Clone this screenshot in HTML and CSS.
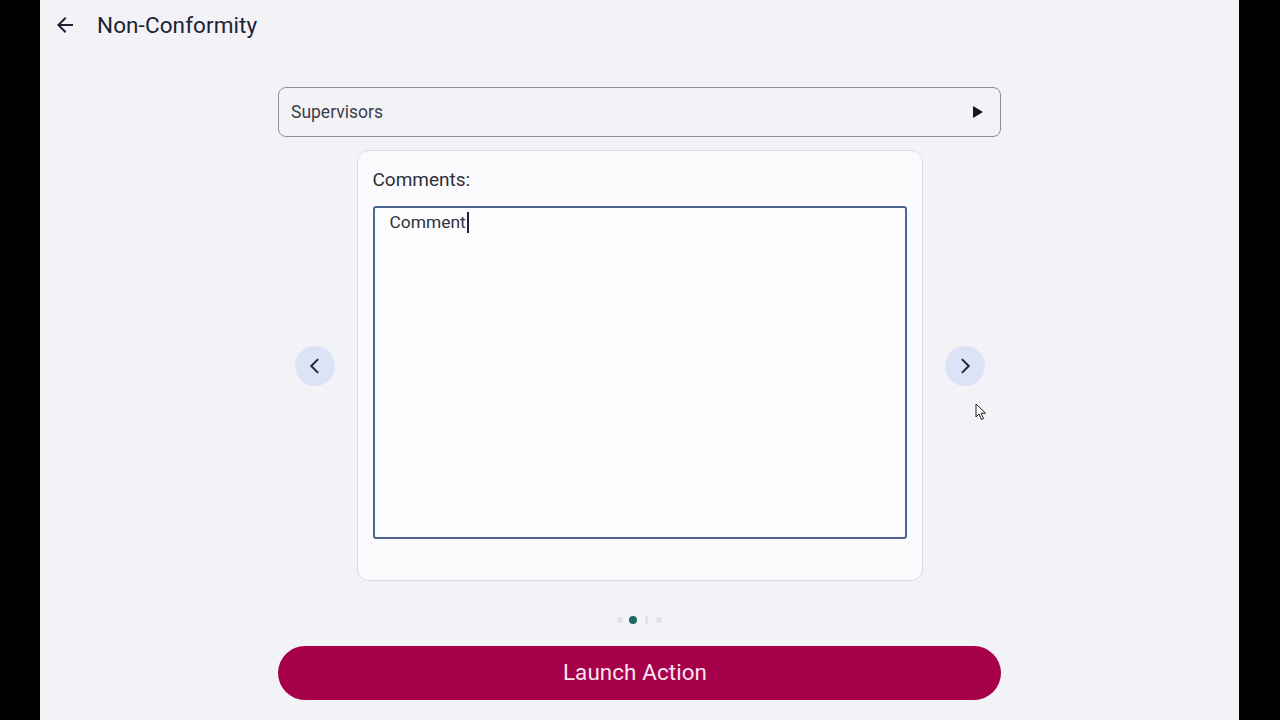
FILE: index.html
```html
<!DOCTYPE html>
<html lang="en">
<head>
<meta charset="utf-8">
<title>Non-Conformity</title>
<link rel="stylesheet" href="styles.css">
</head>
<body>
<div class="app">
  <header class="topbar">
    <svg class="back" viewBox="0 0 24 24" width="24" height="24"><path d="M20 11H7.83l5.59-5.59L12 4l-8 8 8 8 1.41-1.41L7.83 13H20v-2z" fill="#1b2236"/></svg>
    <h1 class="title">Non-Conformity</h1>
  </header>
  <main class="main">
    <div class="select">
      <span class="select-label">Supervisors</span>
      <svg class="play" viewBox="0 0 10 12" width="10" height="12"><polygon points="0,0 10,6 0,12" fill="#16181d"/></svg>
    </div>
    <div class="carousel">
      <button class="nav"><svg viewBox="0 0 24 24" width="30" height="30"><polyline points="14.5,6.5 9,12 14.5,17.5" fill="none" stroke="#222a38" stroke-width="1.6"/></svg></button>
      <section class="card">
        <div class="label">Comments:</div>
        <div class="textarea"><span class="value">Comment</span><span class="caret"></span></div>
      </section>
      <button class="nav"><svg viewBox="0 0 24 24" width="30" height="30"><polyline points="9.5,6.5 15,12 9.5,17.5" fill="none" stroke="#222a38" stroke-width="1.6"/></svg></button>
    </div>
    <div class="dots">
      <span class="dot"></span>
      <span class="dot active"></span>
      <span class="dot pill"></span>
      <span class="dot"></span>
    </div>
    <button class="launch">Launch Action</button>
  </main>
  <svg class="pointer" viewBox="0 0 12 18" width="12" height="18"><path d="M1 1 L1 14 L4 11 L6.5 16.5 L8.5 15.6 L6 10.2 L10.5 10.2 Z" fill="#fff" stroke="#222" stroke-width="1"/></svg>
</div>
</body>
</html>
```

FILE: styles.css
```css
html, body {
  margin: 0;
  padding: 0;
  background: #000;
}
body {
  font-family: Roboto, "Liberation Sans", sans-serif;
}
.app {
  position: relative;
  margin: 0 41px 0 40px;
  height: 720px;
  background: #f2f2f7;
  display: flex;
  flex-direction: column;
  overflow: hidden;
}
.topbar {
  height: 50px;
  display: flex;
  align-items: center;
  padding-left: 13px;
  gap: 20px;
}
.back { display: block; }
.title {
  margin: 0;
  font-size: 22.5px;
  font-weight: 400;
  color: #1b2236;
  letter-spacing: 0.1px;
}
.main {
  display: flex;
  flex-direction: column;
  align-items: center;
}
.select {
  margin-top: 37px;
  width: 723px;
  height: 50px;
  box-sizing: border-box;
  border: 1px solid #8d8f95;
  border-radius: 8px;
  display: flex;
  align-items: center;
  justify-content: space-between;
  padding: 0 17px 0 12px;
}
.select-label {
  font-size: 17.5px;
  color: #3b404b;
}
.play { display: block; }
.carousel {
  margin-top: 13px;
  display: flex;
  align-items: center;
  gap: 22px;
}
.nav {
  width: 40px;
  height: 40px;
  border-radius: 50%;
  border: none;
  background: #dce3f6;
  display: flex;
  align-items: center;
  justify-content: center;
  padding: 0;
}
.nav svg { display: block; }
.card {
  width: 566px;
  height: 431px;
  box-sizing: border-box;
  background: #fbfbfd;
  border: 1px solid #dcdce0;
  border-radius: 12px;
  padding: 17px 15px 0 15px;
}
.label {
  font-size: 19px;
  line-height: 24px;
  color: #2c3039;
}
.textarea {
  margin-top: 14px;
  width: 534px;
  height: 333px;
  box-sizing: border-box;
  border: 2px solid #4f6690;
  border-radius: 3px;
  background: #fcfcfe;
  padding: 4px 15px;
  font-size: 17.4px;
  line-height: 20px;
  color: #2f333b;
  display: flex;
  align-items: flex-start;
}
.caret {
  display: inline-block;
  width: 2px;
  height: 21px;
  background: #1b2236;
  margin-left: 1px;
}
.dots {
  margin-top: 35px;
  height: 8px;
  display: flex;
  align-items: center;
  gap: 6px;
}
.dot {
  width: 6px;
  height: 6px;
  border-radius: 50%;
  background: #e1e1e5;
}
.dot.active {
  width: 8px;
  height: 8px;
  background: #1d6a63;
}
.dot.pill {
  width: 3px;
  height: 8px;
  border-radius: 2px;
  margin: 0 2px;
}
.launch {
  margin-top: 22px;
  width: 723px;
  height: 54px;
  border: none;
  border-radius: 27px;
  background: #a7004a;
  color: #fbe4ee;
  font-family: Roboto, "Liberation Sans", sans-serif;
  font-size: 22.4px;
  letter-spacing: 0.1px;
  padding: 0 9px 2px 0;
}
.pointer {
  position: absolute;
  left: 935px;
  top: 403px;
}
```
